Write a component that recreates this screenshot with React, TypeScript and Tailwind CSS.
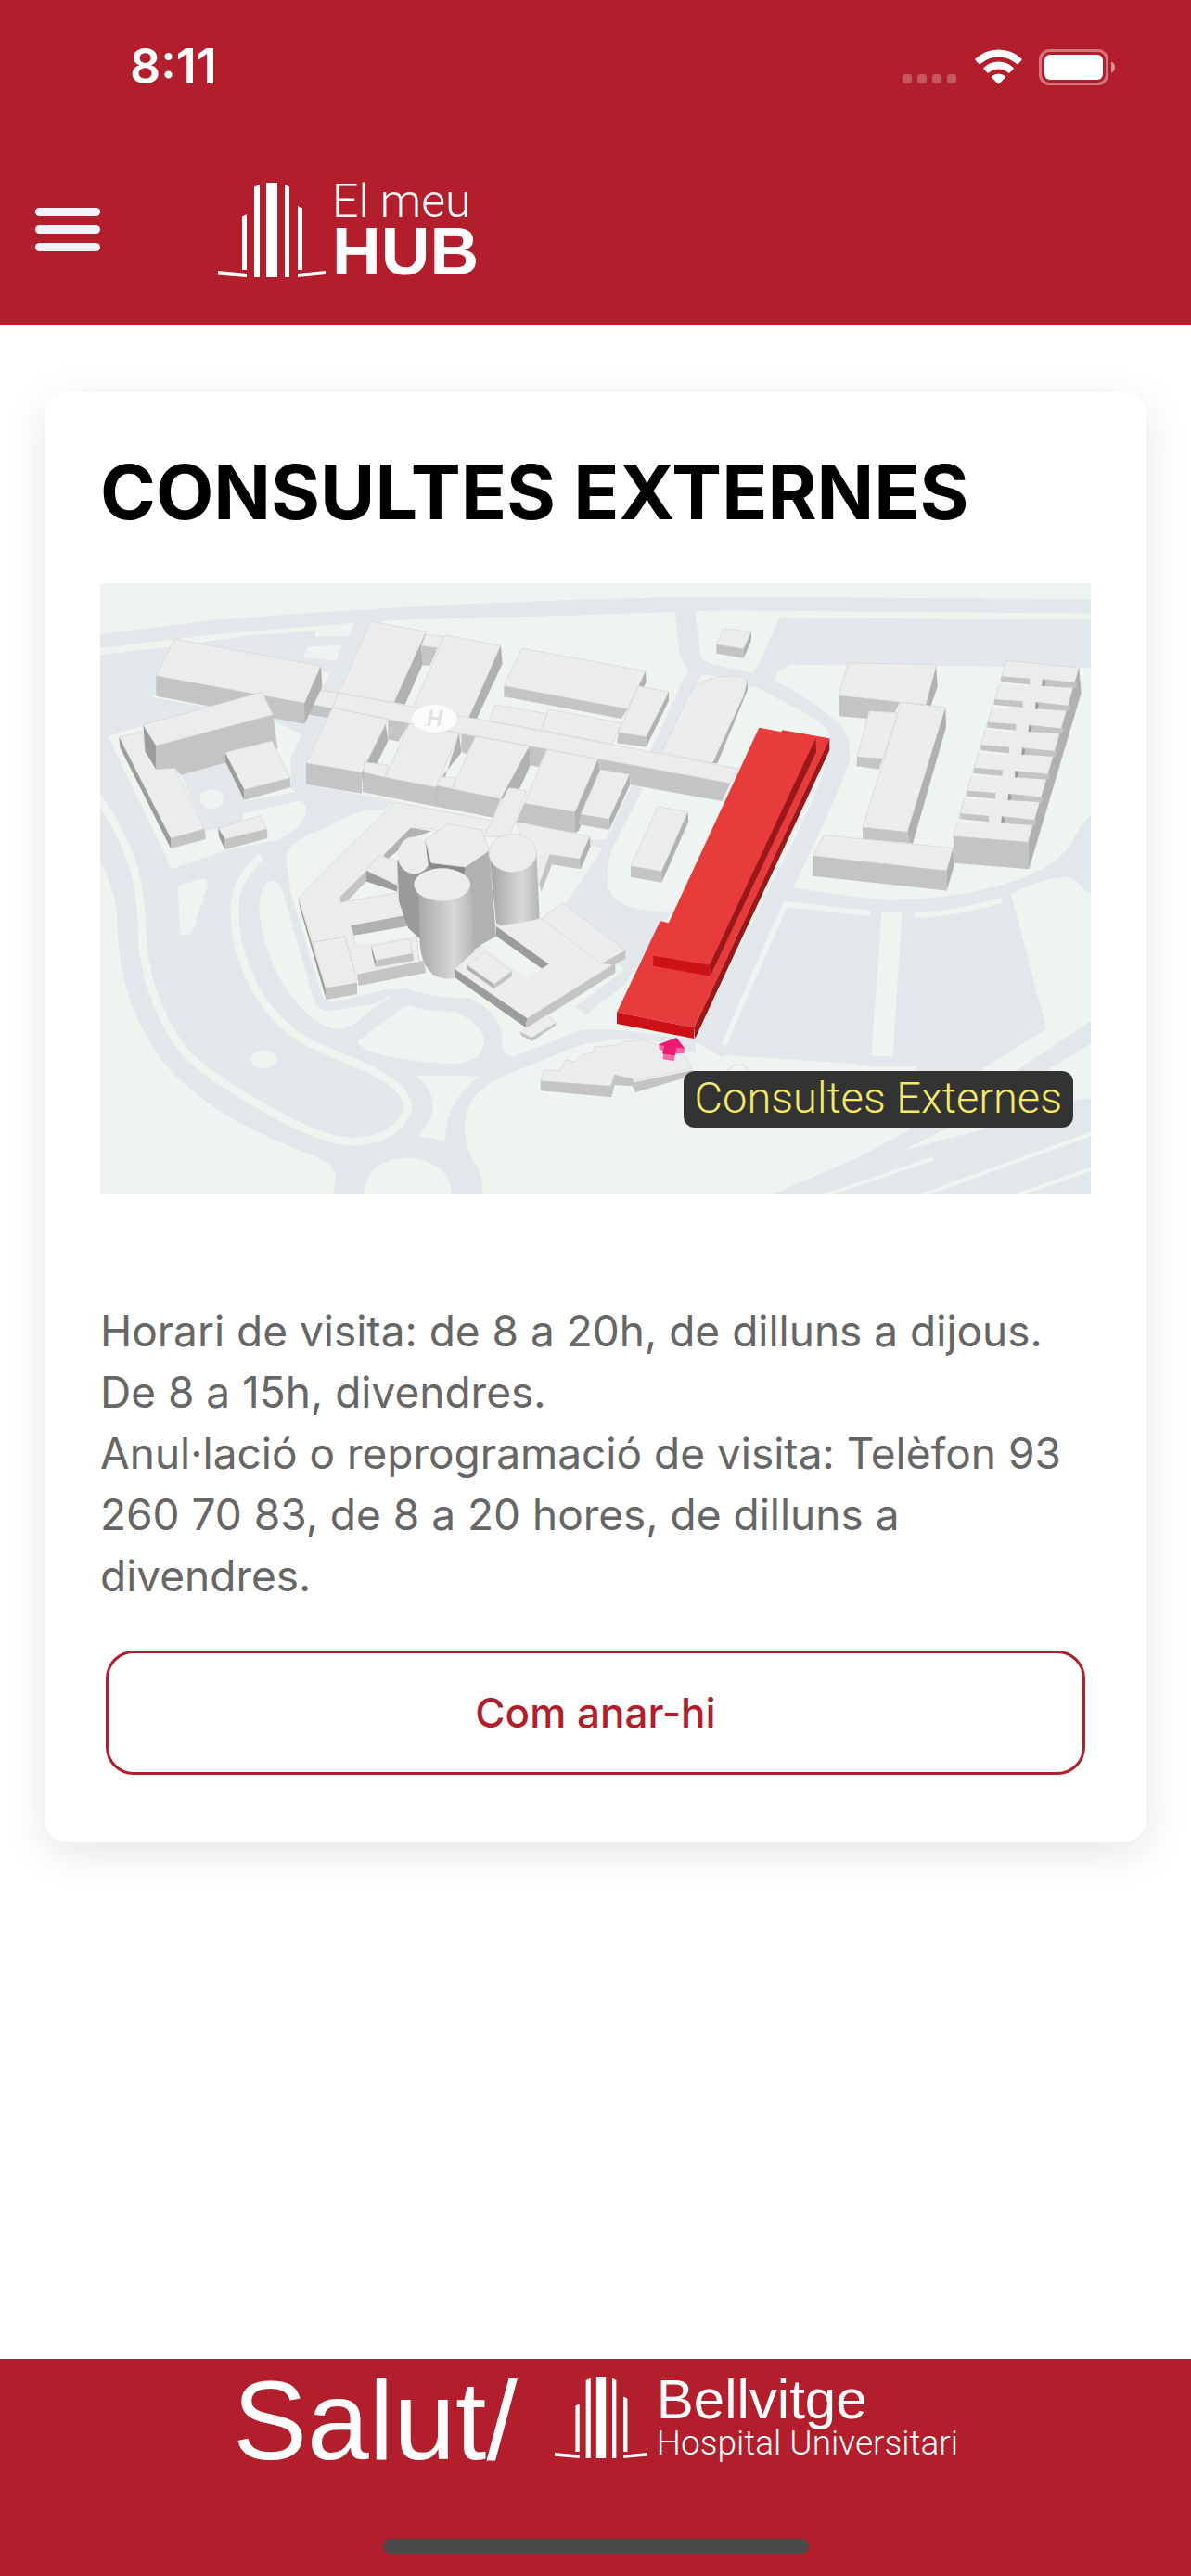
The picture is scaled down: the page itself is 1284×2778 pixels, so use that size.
/**
 * Consultes Externes
 *
 * Location detail screen: site map, opening hours and directions.
 */

import { Fragment } from "react";

type Face = [points: string, fill: string];

// Building shading
const ROOF = "#ececec";
const FRONT = "#c4c4c4";
const SIDE = "#b1b1b1";
const DARK = "#9c9c9a";

// Ground
const GRASS = "#eef4f0";
const ROAD = "#e2e7eb";

const westBlocks: Face[] = [
  ["710,372 795,385 775,435 685,418", ROOF],
  ["685,418 775,435 760,465 685,452", FRONT],
  ["265,210 738,297 685,418 205,330", ROOF],
  ["205,330 685,418 685,485 205,395", FRONT],
  ["738,297 742,365 685,485 685,418", SIDE],
  ["85,528 160,510 170,570 205,632 265,628 362,825 252,855", ROOF],
  ["85,528 252,855 252,888 88,560", DARK],
  ["252,855 362,825 365,858 252,888", FRONT],
  ["205,555 583,455 598,565 285,650 265,628 205,632", FRONT],
  ["163,488 205,555 205,632 170,575", DARK],
  ["163,488 548,382 583,455 205,555", ROOF],
  ["428,578 580,540 638,660 490,698", ROOF],
  ["428,578 490,698 490,732 430,610", DARK],
  ["490,698 638,660 640,690 490,732", FRONT],
  ["405,822 542,782 563,825 428,858", ROOF],
  ["405,822 428,858 428,892 408,850", DARK],
  ["428,858 563,825 565,855 428,892", FRONT],
  ["900,153 1078,187 975,415 795,385", ROOF],
  ["1078,187 1062,235 1068,290 1010,422 975,415", SIDE],
  ["1078,195 1135,203 1115,240 1062,232", ROOF],
  ["1062,232 1115,240 1090,297 1068,295", FRONT],
  ["945,468 955,540 875,705 870,642", SIDE],
  ["775,432 955,470 870,642 690,612", ROOF],
  ["690,612 870,642 870,710 690,680", FRONT],
  ["955,472 1025,483 988,542 955,535", FRONT],
  ["880,608 955,618 945,658 875,642", ROOF],
  ["875,642 945,658 945,720 872,705", FRONT],
  ["1025,483 1185,515 1110,690 945,658", ROOF],
  ["945,658 1110,690 1110,752 945,720", FRONT],
];

const centralBlocks: Face[] = [
  ["120,198 300,232 195,468 15,432", ROOF],
  ["300,232 305,290 220,472 195,468", SIDE],
  ["368,240 768,315 710,437 310,362", ROOF],
  ["310,362 710,437 690,468 310,397", FRONT],
  ["768,315 770,350 760,370 745,365", SIDE],
  ["280,423 450,452 430,505 262,475", ROOF],
  ["455,438 690,482 660,550 430,505", ROOF],
  ["745,362 843,382 770,527 680,512", ROOF],
  ["680,512 770,527 770,560 675,547", FRONT],
  ["843,382 843,410 770,560 770,527", SIDE],
  ["165,515 172,578 110,655 90,690 90,750", SIDE],
  ["172,516 220,527 188,582 172,575", FRONT],
  ["105,655 155,660 142,695 92,685", ROOF],
  ["92,685 142,695 300,727 275,788 90,752", FRONT],
  ["218,525 392,557 300,727 142,695", ROOF],
  ["392,557 395,620 360,695 330,692 310,727 300,727", SIDE],
  ["392,555 450,566 422,625 395,618", FRONT],
  ["350,800 588,850 555,922 458,908 425,1010 380,900", ROOF],
  ["458,908 555,922 558,955 465,940 430,1030 425,1000", FRONT],
  ["588,850 590,880 558,955 555,922", SIDE],
  ["450,568 615,598 540,770 375,742", ROOF],
  ["375,742 540,770 540,838 350,802", FRONT],
  ["615,598 622,640 552,830 540,838 540,770", SIDE],
  ["622,632 717,648 650,793 558,778", ROOF],
  ["558,778 650,793 650,828 550,810", FRONT],
  ["717,648 718,680 650,828 650,793", SIDE],
  ["615,598 1042,677 1015,735 720,682 717,648 622,632", FRONT],
  ["-225,385 20,430 1068,630 1042,677 615,598 0,483 -245,432", ROOF],
  ["325,692 383,702 345,805 325,850 245,850", ROOF],
  ["1022,176 1110,188 1085,242 997,228", ROOF],
  ["997,228 1085,242 1085,272 997,257", FRONT],
  ["1110,188 1110,215 1085,272 1085,242", SIDE],
  ["808,752 905,770 820,962 720,945", ROOF],
  ["720,945 820,962 820,998 720,980", FRONT],
  ["905,770 907,800 820,998 820,962", SIDE],
];

const eastBlocks: Face[] = [
  ["403,288 680,292 688,300 655,422 570,415 372,393", ROOF],
  ["372,393 570,415 555,447 470,445 465,468 375,460", FRONT],
  ["688,300 692,365 670,428 655,422", SIDE],
  ["472,443 565,450 515,597 432,592", ROOF],
  ["432,592 515,597 503,632 430,622", FRONT],
  ["575,415 718,432 595,835 450,820", ROOF],
  ["450,820 595,835 602,870 450,857", FRONT],
  ["718,432 720,495 612,872 602,870 595,835", SIDE],
  ["325,845 742,887 722,960 288,912", ROOF],
  ["288,912 722,960 722,1025 288,977", FRONT],
  ["742,887 745,945 722,1025 722,960", SIDE],
  ["915,280 1150,303 985,868 743,848", ROOF],
  ["743,848 985,868 988,955 745,935", FRONT],
  ["1150,303 1157,385 988,955 985,868", SIDE],
];

const wingBlocks: Face[] = [
  [
    "978,-222 1300,-160 1240,-100 1095,-135 1028,-138 945,-45 885,0 800,90 803,102 990,70 1010,145 835,178 850,243 1030,212 1048,215 1055,290 1070,295 860,335 850,365 752,380 712,232 665,90 750,0",
    ROOF,
  ],
  ["665,90 752,380 755,417 670,120", DARK],
  ["752,380 855,362 855,400 755,417", FRONT],
  ["855,335 1070,292 1078,330 860,372", FRONT],
  ["1028,-138 1095,-128 1040,-108 950,-35 940,-50", SIDE],
  ["925,-50 985,-30 985,45 885,0", ROOF],
  ["885,0 885,35 825,97 803,102 800,85", FRONT],
  ["885,0 985,48 985,68 885,35", DARK],
  ["885,35 985,68 825,97", GRASS],
  ["835,178 1010,145 1018,180 845,210", SIDE],
  ["845,210 1018,180 1045,212 855,243", GRASS],
  ["900,243 1025,220 1035,268 915,290", ROOF],
  ["915,290 1035,268 1038,290 915,312", FRONT],
  ["900,243 915,290 915,312 905,275", DARK],
];

const southBlocks: Face[] = [
  ["500,103 703,258 670,300 385,478 150,318 215,260 285,215 285,180 430,155", ROOF],
  ["150,318 385,478 380,507 150,345", DARK],
  ["385,478 670,300 670,330 400,500 380,507", FRONT],
  ["703,258 703,285 665,305 625,300", FRONT],
  ["285,180 455,302 430,318 285,212", DARK],
  ["285,212 435,318 385,350 235,240", GRASS],
  ["250,262 335,325 278,368 190,305", ROOF],
  ["278,368 335,325 335,342 278,382", FRONT],
  ["190,305 278,368 278,382 192,320", SIDE],
  ["450,465 478,492 400,540 362,522", ROOF],
  ["362,522 400,540 478,492 478,500 400,552 365,532", FRONT],
  [
    "440,645 490,648 510,612 540,618 565,595 600,585 602,570 640,567 680,562 700,552 760,548 800,560 850,580 900,605 918,640 730,680 668,660 655,697 428,680",
    ROOF,
  ],
  ["428,680 655,697 668,660 725,672 732,685 920,645 922,662 735,717 725,697 668,693 658,733 428,712", FRONT],
];

// The highlighted building
const consultes: Face[] = [
  ["1210,-455 1363,-428 925,508 675,458 815,163 850,170", "#e83b3b"],
  ["675,458 925,508 925,543 675,495", "#cc1217"],
  ["1363,-428 1363,-390 928,543 925,508", "#9b1719"],
  ["1135,-463 1318,-428 975,305 793,275", "#e83b3b"],
  ["793,275 975,305 975,340 793,308", "#cc1217"],
  ["1318,-428 1320,-385 978,338 975,305", "#9b1719"],
];

function Faces({ faces }: { faces: Face[] }) {
  return (
    <>
      {faces.map(([points, fill], i) => (
        <polygon
          key={i}
          points={points}
          fill={fill}
          stroke={fill === ROOF ? "#d2d2d2" : "none"}
          strokeWidth={2}
        />
      ))}
    </>
  );
}

function Ground() {
  return (
    <>
      <rect width="3204" height="1977" fill={GRASS} />

      {/* North road */}
      <path
        fill={ROAD}
        d="M0 165 L376 118 L736 92 L1176 67 L1496 55 L1856 45 L2196 45 L3204 52 V98 L2016 88 L1496 105 L996 118 L821 128 L376 165 L0 210Z"
      />

      {/* West car parks */}
      <g transform="translate(-24 -30)">
        <path
          fill={ROAD}
          d="M24 262 L250 235 L500 200 L722 183 L845 158 L900 153 L690 612 L690 680 L980 735 L935 765 Q860 752 760 820 Q630 860 625 920 L640 1030 L740 1360 Q750 1385 790 1382 L950 1345 L1010 1340 Q1100 1372 1220 1372 Q1325 1420 1325 1520 Q1325 1562 1365 1560 L1580 1475 Q1700 1465 1950 1510 L1950 1552 L1840 1515 Q1700 1490 1560 1530 L1340 1620 Q1200 1680 1205 1780 Q1200 1840 1230 1900 Q1265 1940 1260 2007 L778 2007 L787 1945 Q780 1910 720 1885 Q520 1810 400 1730 Q240 1620 190 1520 Q85 1360 80 1140 Q80 1030 24 930Z"
        />
        <path fill={GRASS} d="M845 158 L830 200 L718 204 L722 183Z M695 235 L805 230 L788 280 L680 270Z M740 315 L768 320 L740 375Z M190 398 L210 385 L380 432Z" />
        <path
          fill={GRASS}
          d="M50 525 L165 490 L590 478 L675 520 L640 600 V690 L655 705 L490 735 L485 775 L670 733 Q695 745 688 775 Q680 820 600 860 L430 895 L255 955Z"
        />
        <path fill={ROAD} d="M285 650 L430 612 L490 735 L485 805 L365 832Z" />
        <ellipse cx="385" cy="728" rx="38" ry="31" fill={GRASS} />
      </g>
      <g transform="translate(-24 930)">
        <path
          fill="none"
          stroke={GRASS}
          strokeWidth="26"
          d="M15 -240 Q100 -120 135 0 Q160 100 162 250 Q190 450 300 590 Q380 670 560 770 Q750 880 850 876 Q985 870 1020 770 Q1020 700 880 635 L740 575 Q600 520 520 370 Q450 230 460 100 Q470 20 545 -45"
        />
        <path
          fill={GRASS}
          d="M575 32 Q538 50 538 130 Q560 320 670 440 Q740 512 800 512 Q840 505 870 475 L970 402 L910 430 L770 453 Q730 455 715 420 L612 60 Q600 30 575 32Z"
        />
        <path fill={GRASS} d="M275 50 L355 25 Q375 25 370 55 L325 190 Q300 225 282 200Z" />
        <ellipse cx="553" cy="610" rx="42" ry="29" fill={GRASS} />
        <path
          fill={GRASS}
          d="M855 552 L1015 435 Q1080 455 1170 455 Q1270 500 1265 560 Q1255 620 1170 625 Q1000 620 880 580Z M1045 662 L1255 665 Q1140 740 1140 875 L1055 858 Q1100 800 1100 760 Q1100 710 1045 662Z M877 1050 Q880 930 1030 928 Q1160 950 1160 1050Z"
        />
      </g>

      {/* Middle lanes */}
      <g transform="translate(996 -30)">
        <path
          fill={ROAD}
          d="M862 115 H928 L945 260 Q950 285 1000 295 L1135 325 L1145 290 H1240 Q1185 310 1185 345 L1095 370 L1060 340 L950 325 L820 580 H780 L905 310 Q880 280 875 240Z"
        />
        <path
          fill={ROAD}
          d="M722 683 L760 693 L665 880 Q640 930 645 1000 Q650 1090 850 1095 L700 1330 L575 1425 L540 1400 L700 1280 L500 1080 L630 885 L590 880 V858 L640 860Z"
        />
      </g>

      {/* East car parks */}
      <g transform="translate(2016 -30)">
        <path
          fill={ROAD}
          d="M180 142 L1188 148 V303 L220 293 Q165 310 165 345 Q280 400 380 490 Q415 540 408 600 Q380 700 225 1015 Q400 1045 540 1055 Q760 1050 900 1005 Q1060 960 1120 880 Q1160 800 1188 780 V2007 H160 L430 1890 L600 1800 V1600 L0 1565 L-100 1510 L0 1320 L165 980 Q350 640 345 520 Q330 480 190 410 L75 350 L115 290Z"
        />
      </g>
      <g transform="translate(2016 930)">
        <path
          fill={GRASS}
          d="M930 75 Q1030 25 1100 20 Q1140 20 1160 55 L1188 75 V487 L945 648 H825 L1045 512Z M1188 560 L1040 648 V760 L1188 735Z M512 135 H577 L548 600 H478Z M468 633 H625 V650 H468Z M580 905 L720 835 L1130 745 L1100 770Z"
        />
        <path
          fill="none"
          stroke={GRASS}
          strokeWidth="18"
          d="M475 138 L200 108 L0 565 M617 145 Q750 140 900 95 M0 605 L430 634"
        />
        <path fill="none" stroke={GRASS} strokeWidth="12" d="M330 1050 L680 930 M640 1050 L1188 852 M950 1050 L1188 965" />
        <circle cx="48" cy="665" r="38" fill={GRASS} stroke="#d2d2d2" strokeWidth="2" />
      </g>
    </>
  );
}

function SiteMap() {
  return (
    <svg viewBox="0 0 3204 1977" className="block w-full" role="img" aria-label="Plànol de l'hospital">
      <defs>
        <linearGradient id="tower">
          <stop offset="0" stopColor="#a2a2a1" />
          <stop offset="0.65" stopColor="#d8d8d8" />
          <stop offset="1" stopColor="#b4b4b4" />
        </linearGradient>
      </defs>

      <Ground />

      <g transform="translate(-24 -30)">
        <Faces faces={westBlocks} />
      </g>
      <g transform="translate(-24 930)">
        <Faces faces={wingBlocks} />
        <path d="M712 232 L815 213 L850 335" fill="none" stroke="#c8c8c8" strokeWidth="3" strokeDasharray="6 4" />
      </g>
      <g transform="translate(996 -30)">
        <path
          d="M820 577 L910 385 Q940 335 1040 330 Q1100 325 1097 360 L1085 395 L985 612Z"
          fill={ROOF}
          stroke="#d2d2d2"
          strokeWidth="2"
        />
        <path d="M1097 345 L1098 375 L1000 613 L985 612 L1085 395Z" fill={SIDE} />
        <Faces faces={centralBlocks} />
        <ellipse cx="85" cy="468" rx="73" ry="45" fill="#fbfbfb" />
        <text
          x="85"
          y="493"
          textAnchor="middle"
          fontSize="70"
          fill="#e2e2e2"
          className="font-['Liberation_Sans'] font-bold italic"
        >
          H
        </text>
      </g>

      {/* Main towers */}
      <g transform="translate(996 930)">
        <path d="M-35 -35 L60 -60 L100 0 L60 240 L0 185 L-30 100Z" fill="#9a9a98" />
        <ellipse cx="20" cy="-50" rx="54" ry="60" fill={ROOF} />
        <path d="M185 -12 L262 -65 L272 60 L285 212 L205 260 L180 0Z" fill={SIDE} />
        <path d="M55 -100 L75 -25 L185 -12 L180 20 L66 -12Z" fill="#888887" />
        <path d="M262 -60 L285 170 Q350 205 425 152 L415 -60Z" fill="url(#tower)" />
        <ellipse cx="338" cy="-57" rx="77" ry="62" fill={ROOF} stroke="#d2d2d2" strokeWidth="2" />
        <polygon points="130,-152 238,-132 262,-65 185,-12 75,-25 55,-100" fill={ROOF} stroke="#d2d2d2" strokeWidth="2" />
        <path d="M20 45 L35 90 L38 240 Q50 350 130 350 Q205 345 215 250 L202 45Z" fill="url(#tower)" />
        <ellipse cx="110" cy="45" rx="91" ry="53" fill={ROOF} />
      </g>

      <g transform="translate(2016 -30)">
        <Faces faces={eastBlocks} />
        {/* Courtyards between the comb's teeth, front to back */}
        {[0, 1, 2, 3, 4, 5, 6].map((i) => (
          <Fragment key={i}>
            <path transform={`translate(${i * -22} ${i * 74})`} d="M898 331 L990 338 V358 L898 349Z" fill={FRONT} />
            <path transform={`translate(${i * -22} ${i * 74})`} d="M884 349 L990 359 L984 363 L884 357Z" fill={GRASS} />
            <path transform={`translate(${i * -22} ${i * 74})`} d="M1032 340 L1144 352 L1138 369 L1030 362Z" fill={FRONT} />
            <path transform={`translate(${i * -22} ${i * 74})`} d="M1032 340 L1042 348 L1038 363 L1030 362Z" fill={DARK} />
          </Fragment>
        ))}
      </g>

      <g transform="translate(996 930)">
        <Faces faces={southBlocks} />
        <path d="M430 155 L625 300" stroke="#d2d2d2" strokeWidth="2" />
        <Faces faces={consultes} />
        <path d="M810 562 L868 565 L895 575 L893 590 L864 592 L860 615 L824 610 L826 582 L812 578Z" fill="#f268a6" />
        <path d="M868 540 L895 575 L868 572 L862 598 L822 592 L828 568 L810 562Z" fill="#ee1a72" />
      </g>
    </svg>
  );
}

function TowerMark({ className }: { className: string }) {
  return (
    <svg viewBox="0 0 116 102" fill="currentColor" className={className} aria-hidden="true">
      <path d="M26 36.500 L31 34 V94 H26Z M39 4.500 L45 2 V102 H39Z M52 0 H64 V102 H52Z M72 2 L77 4.500 V102 H72Z M86 25 L91 27.500 V94 H86Z M0 95 L31 98 V102 L0 99.500Z M86 98 L116 95 V99 L86 102Z" />
    </svg>
  );
}

function StatusBar() {
  return (
    <div className="flex h-[144px] items-center justify-between pr-[82px] pl-[140px]">
      <span className="font-['Inter'] text-[52px] font-semibold">8:11</span>
      <div className="flex items-center gap-[18px]">
        <svg viewBox="0 0 60 38" className="h-[38px] w-[60px]" fill="#fff" fillOpacity="0.25">
          <rect x="0" y="27" width="10" height="10" rx="3" />
          <rect x="16" y="27" width="10" height="10" rx="3" />
          <rect x="32" y="27" width="10" height="10" rx="3" />
          <rect x="48" y="27" width="10" height="10" rx="3" />
        </svg>
        <svg viewBox="0 0 51 38" className="h-[38px] w-[51px]" fill="#fff">
          <path d="M0.500 10.500 Q11 0.500 25.500 0.500 Q40 0.500 50.500 10.500 Q51 11.500 50 12.500 L46.500 16 Q45.500 16.500 44.500 15.500 Q36 8.500 25.500 8.500 Q15 8.500 6.500 15.500 Q5.500 16.500 4.500 16 L1 12.500 Q0 11.500 0.500 10.500Z" />
          <path d="M9.500 20 Q16 13.500 25.500 13.500 Q35 13.500 41.500 20 Q42 21 41.500 21.500 L37.500 25.500 Q36.500 26 35.500 25 Q31 21.500 25.500 21.500 Q20 21.500 15.500 25 Q14.500 26 13.500 25.500 L9.500 21.500 Q9 21 9.500 20Z" />
          <path d="M18.500 29 Q21.500 26.500 25.500 26.500 Q29.500 26.500 32.500 29 Q33.500 30 32.500 31 L26.500 37 Q25.500 38 24.500 37 L18.500 31 Q17.500 30 18.500 29Z" />
        </svg>
        <svg viewBox="0 0 82 39" className="h-[39px] w-[82px]">
          <rect x="1.500" y="1.500" width="72" height="36" rx="10" fill="none" stroke="#fff" strokeOpacity="0.400" strokeWidth="3" />
          <rect x="6" y="6" width="63" height="27" rx="6" fill="#fff" />
          <path d="M78 13.500 Q82 15 82 19.500 Q82 24 78 25.500Z" fill="#fff" fillOpacity="0.500" />
        </svg>
      </div>
    </div>
  );
}

function Header() {
  return (
    <header className="bg-[#b21e2b] pb-[50px] text-white">
      <StatusBar />
      <div className="flex items-center pt-[50px] pl-[38px]">
        <button type="button" aria-label="Menú" className="flex w-[70px] flex-col gap-[10px]">
          <span className="h-[9px] rounded-full bg-[#f5f3fa]" />
          <span className="h-[9px] rounded-full bg-[#f5f3fa]" />
          <span className="h-[9px] rounded-full bg-[#f5f3fa]" />
        </button>
        <a href="#inici" className="ml-[127px] flex items-center gap-[7px]">
          <TowerMark className="h-[102px] w-[116px]" />
          <span className="flex flex-col">
            <span className="font-['Roboto'] text-[50px] leading-[46px] font-light">El meu</span>
            <span className="font-['Liberation_Sans'] text-[73px] leading-[61px] font-bold">HUB</span>
          </span>
        </a>
      </div>
    </header>
  );
}

function Footer() {
  return (
    <footer className="mt-auto flex h-[234px] flex-col items-center justify-between bg-[#b21e2b] pb-6 font-['Liberation_Sans'] text-white">
      <div className="flex items-start gap-10 pt-4">
        <span className="text-[120px] leading-[100px]">Salut/</span>
        <div className="flex items-start gap-[10px] pt-[2px]">
          <TowerMark className="h-[90px] w-[100px]" />
          <div className="flex flex-col">
            <span className="text-[60px] leading-[52px]">Bellvitge</span>
            <span className="font-['Roboto'] text-[37px] leading-[42px] font-light">Hospital Universitari</span>
          </div>
        </div>
      </div>
      <div className="h-4 w-[459px] rounded-full bg-[#4a4a4a]" />
    </footer>
  );
}

export default function App() {
  return (
    <div className="flex min-h-screen flex-col bg-white font-['Inter',sans-serif]">
      <Header />

      <main className="px-12 py-[72px]">
        <article className="rounded-3xl bg-white px-[60px] pt-[58px] pb-[72px] shadow-[0_12px_48px_rgba(0,0,0,0.1)]">
          <h1 className="text-[81px] leading-[100px] font-bold text-black">CONSULTES EXTERNES</h1>

          <div className="relative mt-12">
            <SiteMap />
            <span className="absolute right-[19px] bottom-[72px] rounded-xl bg-[#333] px-3 pb-1 font-['Roboto'] text-[47px] leading-[57px] font-light text-[#f3e96b]">
              Consultes Externes
            </span>
          </div>

          <p className="mt-[114px] text-[46px] leading-[66px] text-[#666]">
            Horari de visita: de 8 a 20h, de dilluns a dijous. De 8 a 15h, divendres.
            <br />
            Anul·lació o reprogramació de visita: Telèfon 93 260 70 83, de 8 a 20 hores, de dilluns a divendres.
          </p>

          <div className="px-[6px] pt-12">
            <button
              type="button"
              className="h-[134px] w-full rounded-[30px] border-3 border-[#b21e2b] text-[44px] font-medium text-[#b21e2b]"
            >
              Com anar-hi
            </button>
          </div>
        </article>
      </main>

      <Footer />
    </div>
  );
}
